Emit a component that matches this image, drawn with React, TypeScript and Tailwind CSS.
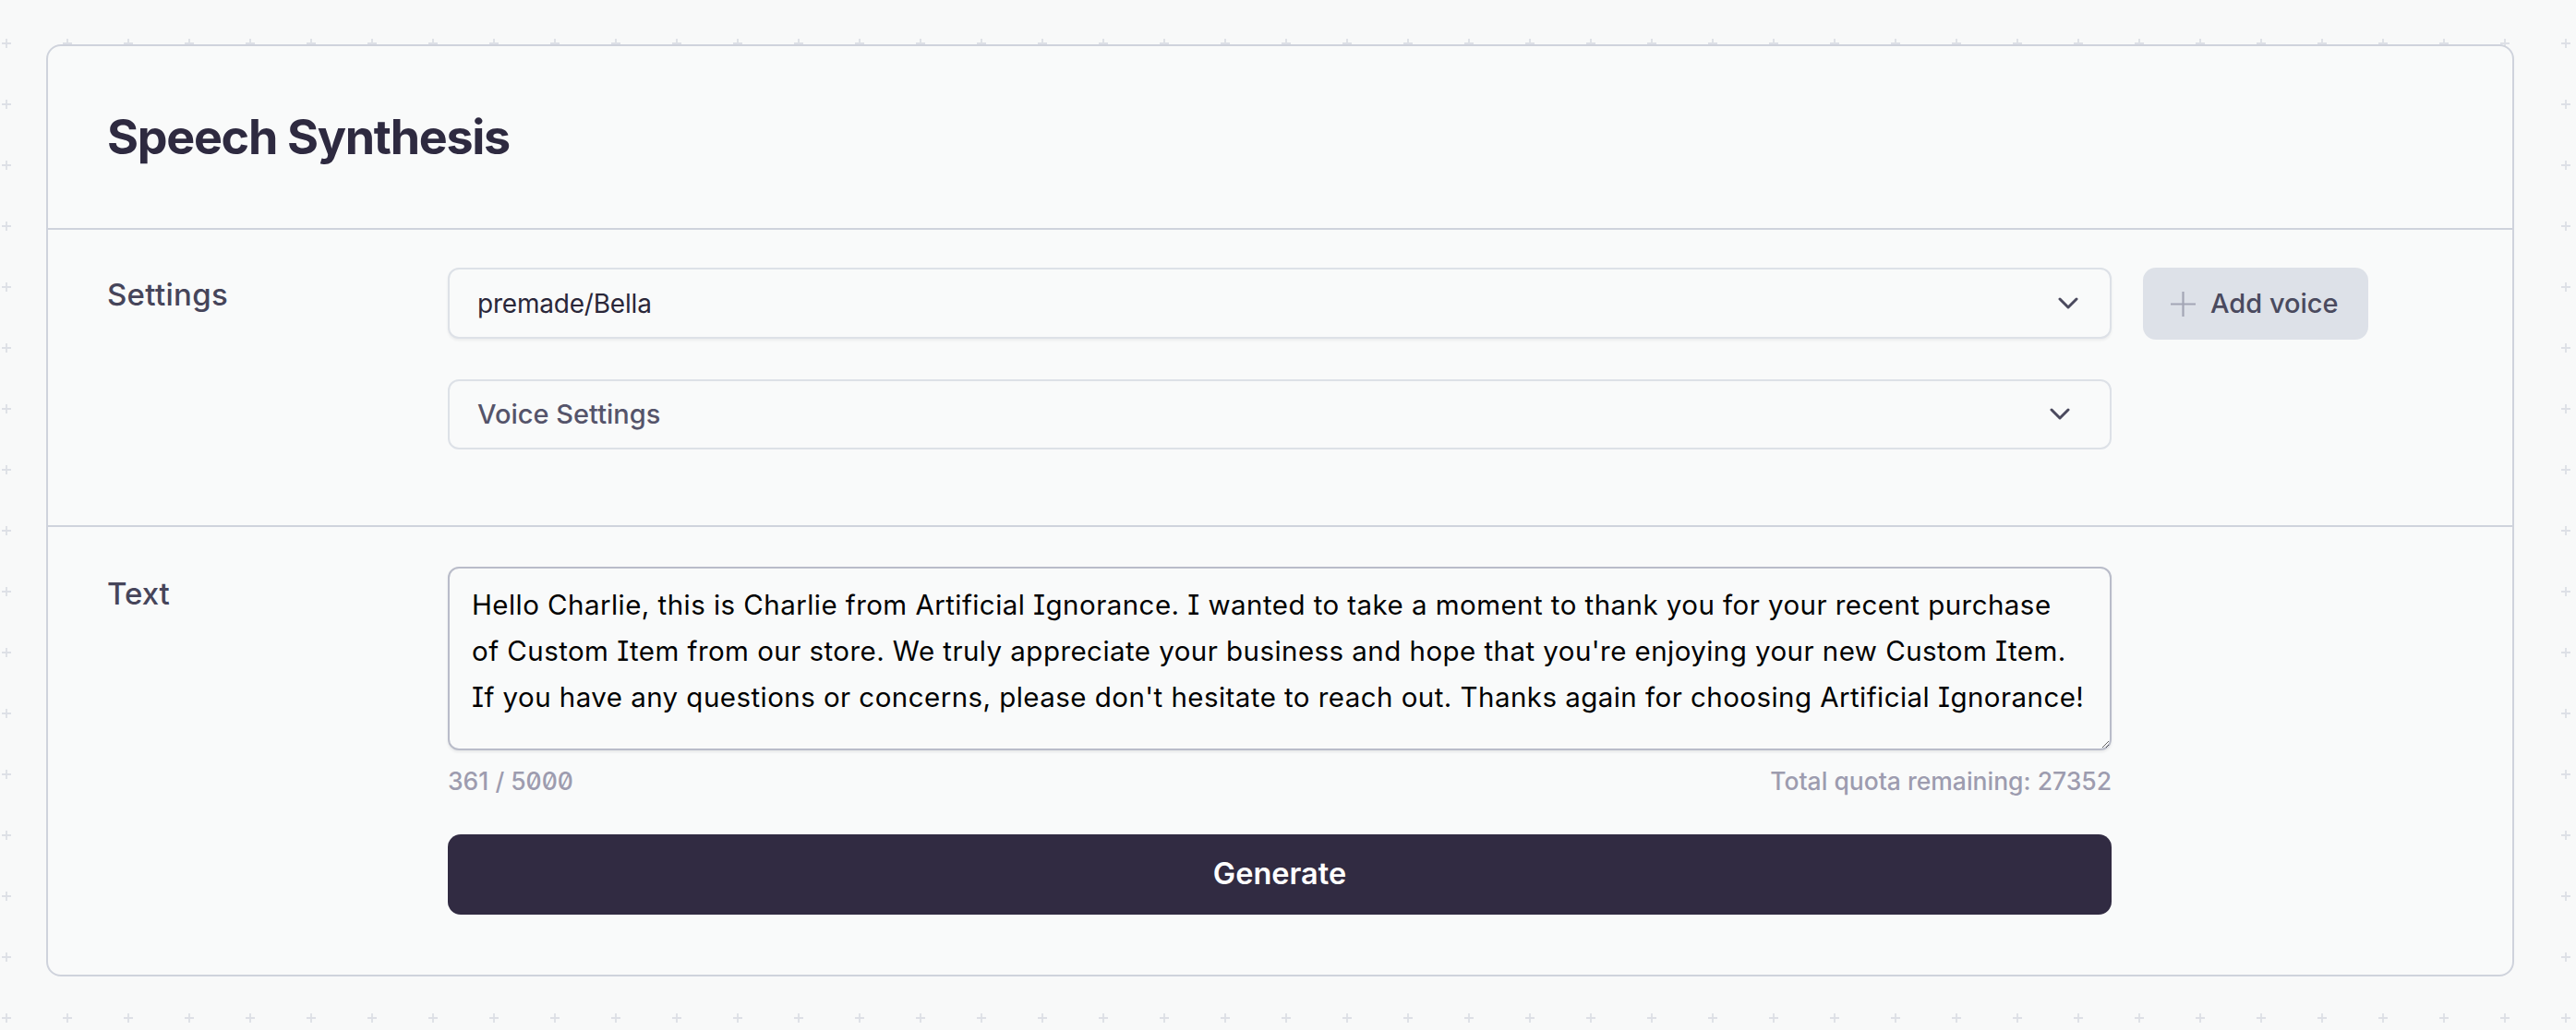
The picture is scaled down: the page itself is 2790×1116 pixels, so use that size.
import { useState } from "react";

const MESSAGE =
  "Hello Charlie, this is Charlie from Artificial Ignorance. I wanted to take a moment to thank you for your recent purchase\nof Custom Item from our store. We truly appreciate your business and hope that you're enjoying your new Custom Item.\nIf you have any questions or concerns, please don't hesitate to reach out. Thanks again for choosing Artificial Ignorance!";

function Chevron() {
  return (
    <svg width="22" height="14" viewBox="0 0 22 14" fill="none">
      <polyline
        points="2,2 11,11 20,2"
        stroke="#4b4a5e"
        strokeWidth="3"
        strokeLinecap="round"
        strokeLinejoin="round"
      />
    </svg>
  );
}

export default function App() {
  const [text, setText] = useState(MESSAGE);
  const count = text.replace(/\n/g, " ").length;

  return (
    <div className="relative min-h-screen overflow-hidden bg-[#f8f9f9] font-['Inter',sans-serif]">
      {/* plus grid in the background */}
      <svg className="absolute inset-0 h-full w-full" aria-hidden="true">
        <defs>
          <pattern id="plus" width="66" height="66" patternUnits="userSpaceOnUse">
            <path d="M2 47H12M7 42V52" stroke="#dde0e6" strokeWidth="1.8" />
          </pattern>
        </defs>
        <rect width="100%" height="100%" fill="url(#plus)" />
      </svg>

      <div className="relative pt-[48px] pl-[50px]">
        <div className="w-[2673px] rounded-[16px] border-2 border-[#cfd3dc] bg-[#f9fafa]">
          {/* Header */}
          <div className="flex h-[199px] items-center border-b-2 border-[#cfd3dc] px-[64px]">
            <h1 className="text-[52px] font-bold leading-none tracking-[-1.3px] text-[#2e2a40]">
              Speech Synthesis
            </h1>
          </div>

          {/* Settings */}
          <div className="flex border-b-2 border-[#cfd3dc] px-[64px] pt-[41px] pb-[82px]">
            <div className="w-[369px] shrink-0 pt-[4px] text-[33px] font-medium leading-[50px] tracking-[0.3px] text-[#46455a]">
              Settings
            </div>
            <div className="w-[1802px] shrink-0">
              <button className="flex h-[77px] w-full items-center justify-between rounded-[12px] border-2 border-[#dde1e7] bg-[#f9fafa] pl-[30px] pr-[34px] shadow-[0_2px_3px_rgba(20,20,40,0.06)]">
                <span className="text-[28px] tracking-[-0.2px] text-[#2a2739]">premade/Bella</span>
                <Chevron />
              </button>
              <button className="mt-[44px] flex h-[76px] w-full items-center justify-between rounded-[12px] border-2 border-[#dde1e7] bg-[#f9fafa] pl-[30px] pr-[43px]">
                <span className="text-[29px] font-medium text-[#55546a]">Voice Settings</span>
                <Chevron />
              </button>
            </div>
            <div className="ml-[34px]">
              <button className="flex h-[78px] w-[244px] items-center gap-[16px] rounded-[14px] bg-[#dde1e8] pl-[30px]">
                <svg width="27" height="27" viewBox="0 0 27 27" fill="none">
                  <path d="M0 13.5H27M13.5 0V27" stroke="#a3a6b5" strokeWidth="2.2" />
                </svg>
                <span className="text-[29px] font-medium text-[#4a4a5e]">Add voice</span>
              </button>
            </div>
          </div>

          {/* Text */}
          <div className="flex px-[64px] pt-[43px] pb-[65px]">
            <div className="w-[369px] shrink-0 pt-[4px] text-[33px] font-medium leading-[50px] text-[#46455a]">
              Text
            </div>
            <div className="w-[1802px] shrink-0">
              <textarea
                value={text}
                onChange={(e) => setText(e.target.value)}
                className="block h-[199px] w-full rounded-[12px] border-2 border-[#b9bcc9] bg-[#f9fafa] pt-[14px] pl-[24px] pr-[14px] text-[29.5px] leading-[50px] tracking-[0.45px] text-black shadow-[0_2px_3px_rgba(20,20,40,0.08)] outline-none [font-feature-settings:'cv08']"
              />
              <div className="mt-[16px] flex h-[36px] items-center justify-between text-[26.5px] font-medium text-[#9d9caf]">
                <span className="[font-feature-settings:'zero']">{count} / 5000</span>
                <span>Total quota remaining: 27352</span>
              </div>
              <button className="mt-[39px] flex h-[87px] w-full items-center justify-center rounded-[14px] bg-[#312b42] text-[32.5px] font-semibold text-white">
                Generate
              </button>
            </div>
          </div>
        </div>
      </div>
    </div>
  );
}
